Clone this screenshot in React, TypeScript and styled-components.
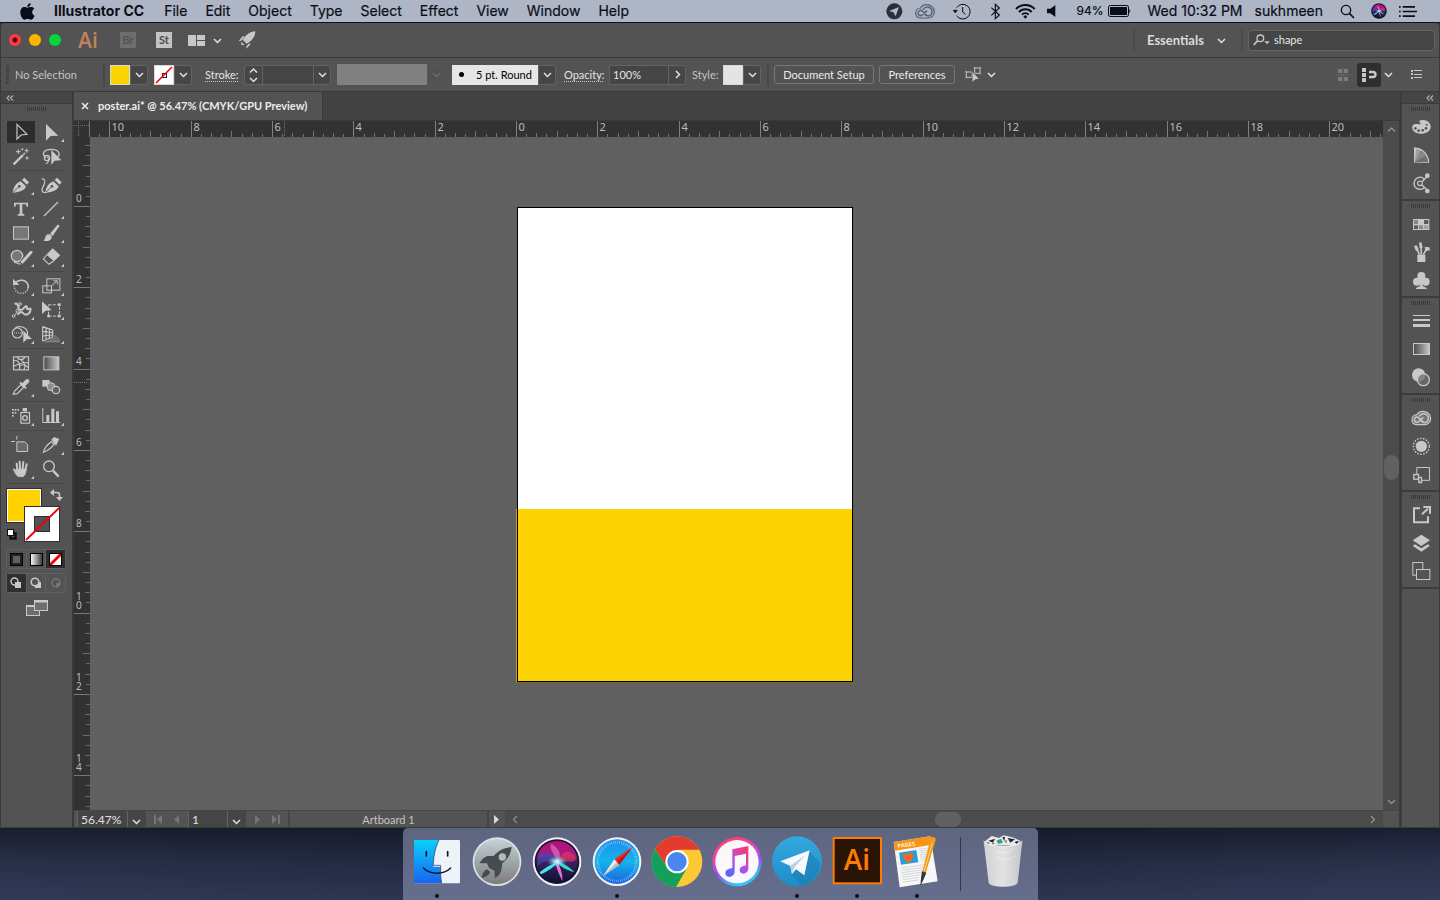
import React from 'react';
import styled, { createGlobalStyle, css } from 'styled-components';

const UI = 'Lato, "Open Sans", sans-serif';
const SYS = 'Inter, "Liberation Sans", sans-serif';
const ICON = '#c8c8c8';
const YELLOW = '#fcd303';

const GlobalStyle = createGlobalStyle`
  *, *::before, *::after { box-sizing: border-box; }
  body { margin: 0; background: #1d2335; }
  button, input, select { font: inherit; color: inherit; margin: 0; padding: 0; border: 0; background: none; border-radius: 0; }
  svg { display: block; flex: none; }
`;

/* ---------- shell ---------- */

const Desktop = styled.div`
  display: flex;
  flex-direction: column;
  min-height: 100vh;
  overflow: hidden;
  background: linear-gradient(90deg, #2b334c 0, #232a40 28%, #232a40 72%, #2d3550 100%);
`;

const MenuBar = styled.header`
  display: flex;
  align-items: center;
  justify-content: space-between;
  flex: none;
  height: 23px;
  padding: 0 23px 0 20px;
  background: #aeb6c5;
  border-bottom: 1px solid #0b1426;
  color: #0a0d18;
  font: 14px/22px ${SYS};
  white-space: nowrap;
`;

const MenuList = styled.nav`
  display: flex;
  align-items: center;
  gap: 18px;
`;

const MenuItem = styled.button<{ $bold?: boolean }>`
  padding-right: ${p => (p.$bold ? 2 : 0)}px;
  font-weight: ${p => (p.$bold ? 700 : 400)};
  -webkit-text-stroke: ${p => (p.$bold ? '0' : '0.2px')};
`;

const AppleSlot = styled.button`
  width: 16px;
`;

const StatusList = styled.div`
  display: flex;
  align-items: center;
  gap: 12px;
`;

const StatusSlot = styled.span<{ $w: number; $center?: boolean; $muted?: boolean }>`
  display: flex;
  align-items: center;
  justify-content: ${p => (p.$center ? 'center' : 'flex-start')};
  width: ${p => p.$w}px;
  color: ${p => (p.$muted ? '#596171' : 'inherit')};
`;

const Battery = styled.span`
  display: flex;
  align-items: center;
  gap: 5px;
  padding-right: 4px;
  font-size: 12px;
  -webkit-text-stroke: 0.2px;
`;

const AppWindow = styled.main`
  display: flex;
  flex-direction: column;
  flex: 1;
  min-height: 0;
  background: #535353;
  border: 1px solid #3a3a3a;
  border-top: 0;
  border-radius: 4px 4px 0 0;
  color: #dcdcdc;
  font: 11px/16px ${UI};
  white-space: nowrap;
`;

const Bar = styled.div<{ $h: number }>`
  display: flex;
  align-items: center;
  flex: none;
  height: ${p => p.$h}px;
  border-bottom: 1px solid #3a3a3a;
`;

const Spacer = styled.div`
  flex: 1;
`;

const VRule = styled.span<{ $h?: number }>`
  width: 2px;
  height: ${p => p.$h ?? 20}px;
  background: #484848;
`;

/* ---------- title bar ---------- */

const Lights = styled.div`
  display: flex;
  gap: 8px;
  padding-left: 8px;
`;

const Light = styled.button<{ $c: string; $dot?: boolean }>`
  width: 12px;
  height: 12px;
  border-radius: 50%;
  background: ${p => (p.$dot ? `radial-gradient(circle, #5c0005 0 2px, ${p.$c} 3px)` : p.$c)};
`;

const AiMark = styled.span`
  width: 25px;
  margin-left: 17px;
  color: #c4825a;
  font: 600 21px/30px "Open Sans", sans-serif;
`;

const AppTile = styled.button<{ $on?: boolean }>`
  width: 16px;
  height: 16px;
  background: ${p => (p.$on ? '#c4c4c4' : '#6e6e6e')};
  color: ${p => (p.$on ? '#4b4b4b' : '#545454')};
  font: 700 11px/16px ${UI};
  text-align: center;
`;

const TitleTiles = styled.div`
  display: flex;
  align-items: center;
  gap: 20px;
  padding-left: 17px;
`;

const TitleIcons = styled.div`
  display: flex;
  align-items: center;
  gap: 8px;
  padding: 0 16px;
`;

const TitleRight = styled.div`
  display: flex;
  align-items: center;
  gap: 5px;
  padding-right: 4px;
`;

const Workspace = styled.div`
  position: relative;
  display: flex;
  align-items: center;
  width: 96px;
  padding-left: 7px;
  font-size: 13px;
  font-weight: 700;
`;

const PlainSelect = styled.select`
  width: 100%;
  appearance: none;
  outline: 0;
`;

const SelectMark = styled.span`
  position: absolute;
  right: 10px;
  pointer-events: none;
`;

const SearchBox = styled.label`
  display: flex;
  align-items: center;
  gap: 4px;
  width: 187px;
  height: 21px;
  padding-left: 4px;
  border: 1px solid #646464;
  border-radius: 3px;
  background: #454545;
`;

const SearchInput = styled.input`
  width: 140px;
  outline: 0;
  color: #e6e6e6;
`;

/* ---------- control bar ---------- */

const Control = styled.div`
  display: flex;
  align-items: center;
  padding-left: 5px;
`;

const Grip = styled.span`
  width: 3px;
  height: 20px;
  background: repeating-linear-gradient(180deg, #3a3a3a 0 1px, transparent 1px 2px);
`;

const Label = styled.label<{ $w: number; $dotted?: boolean; $dim?: boolean }>`
  width: ${p => p.$w}px;
  height: 14px;
  line-height: 14px;
  color: ${p => (p.$dim ? '#c4c4c4' : '#e4e4e4')};
  ${p => p.$dotted && css`border-bottom: 1px dotted #c8c8c8;`}
`;

const Group = styled.div<{ $ml: number }>`
  display: flex;
  align-items: center;
  height: 21px;
  margin-left: ${p => p.$ml}px;
`;

const Swatch = styled.button<{ $fill: string }>`
  width: 20px;
  height: 20px;
  border: 1px solid #d8d8d8;
  background: ${p => p.$fill};
`;

const Drop = styled.button<{ $off?: boolean }>`
  display: flex;
  align-items: center;
  justify-content: center;
  width: 18px;
  height: 20px;
  border: 1px solid ${p => (p.$off ? '#575757' : '#636363')};
  border-radius: 0 3px 3px 0;
  background: ${p => (p.$off ? '#525252' : '#464646')};
  color: ${p => (p.$off ? '#6c6c6c' : '#dedede')};
`;

const Stepper = styled.span`
  display: flex;
  flex-direction: column;
  align-items: center;
  justify-content: center;
  gap: 2px;
  width: 18px;
  height: 20px;
  border: 1px solid #636363;
  border-right: 0;
  border-radius: 3px 0 0 3px;
  background: #464646;
`;

const Field = styled.input<{ $w: number }>`
  width: ${p => p.$w}px;
  height: 20px;
  padding: 0 3px;
  border: 1px solid #636363;
  border-right: 0;
  background: #454545;
  color: #e4e4e4;
  outline: 0;
`;

const Profile = styled.span`
  width: 90px;
  height: 21px;
  background: #808080;
`;

const BrushBox = styled.div`
  display: flex;
  align-items: center;
  gap: 12px;
  width: 86px;
  height: 20px;
  padding-left: 7px;
  background: #e6e6e6;
  color: #000;
`;

const BrushDot = styled.span`
  width: 5px;
  height: 5px;
  border-radius: 50%;
  background: #000;
`;

const Push = styled.button<{ $w: number }>`
  width: ${p => p.$w}px;
  height: 19px;
  margin-left: 5px;
  border: 1px solid #777;
  border-radius: 3px;
  color: #ececec;
  line-height: 16px;
`;

const SnapGroup = styled.div`
  display: flex;
  align-items: center;
  padding-right: 16px;
`;

const SnapButton = styled.button`
  display: flex;
  align-items: center;
  justify-content: center;
  width: 24px;
  height: 24px;
  margin: 0 3px 0 7px;
  border-radius: 3px;
  background: #2f2f2f;
`;

/* ---------- body ---------- */

const Body = styled.div`
  display: flex;
  flex: 1;
  min-height: 0;
`;

const ToolPanel = styled.aside`
  display: flex;
  flex-direction: column;
  flex: none;
  width: 73px;
  border-right: 2px solid #3a3a3a;
`;

const PanelHead = styled.div<{ $right?: boolean }>`
  display: flex;
  align-items: center;
  justify-content: ${p => (p.$right ? 'flex-end' : 'flex-start')};
  flex: none;
  height: 12px;
  padding: 0 5px;
  border-bottom: 1px solid #3a3a3a;
  background: #454545;
`;

const HGrip = styled.span`
  align-self: center;
  flex: none;
  width: 19px;
  height: 4px;
  background: repeating-linear-gradient(90deg, #3a3a3a 0 1px, transparent 1px 2px);
`;

const ToolBody = styled.div`
  display: flex;
  flex-direction: column;
  padding: 3px 5px 0;
`;

const ToolGroup = styled.div`
  display: grid;
  grid-template-columns: 30px 30px;
  grid-auto-rows: 24px;
  margin-bottom: 5px;
  position: relative;
  &::after {
    content: '';
    position: absolute;
    left: 0;
    right: 1px;
    bottom: -3px;
    height: 1px;
    background: #474747;
  }
`;

const ToolTop = styled.div`
  display: flex;
  flex-direction: column;
  height: 13px;
`;

const Tool = styled.button<{ $on?: boolean }>`
  width: 30px;
  height: 24px;
  background: ${p => (p.$on ? 'linear-gradient(#2d2d2d, #2d2d2d) center / 28px 22px no-repeat' : 'none')};
`;

const ModeRow = styled.div`
  display: flex;
  width: 60px;
  height: 20px;
  margin-top: 4px;
  border: 1px solid #606060;
  border-radius: 3px;
`;

const Mode = styled.button<{ $on?: boolean }>`
  display: flex;
  flex: 1;
  align-items: center;
  justify-content: center;
  border-right: 1px solid #606060;
  background: ${p => (p.$on ? '#2f2f2f' : 'none')};
  &:last-child { border-right: 0; }
`;

const ScreenMode = styled.button`
  align-self: center;
  margin-top: 7px;
`;

const DocumentArea = styled.section`
  display: flex;
  flex-direction: column;
  flex: 1;
  min-width: 0;
`;

const TabBar = styled.div`
  display: flex;
  flex: none;
  height: 29px;
  background: #424242;
  border-bottom: 1px solid #3a3a3a;
`;

const Tab = styled.div`
  display: flex;
  align-items: center;
  gap: 9px;
  width: 249px;
  padding-left: 7px;
  border-right: 1px solid #383838;
  background: #535353;
  color: #ececec;
  font-weight: 700;
`;

const Work = styled.div`
  display: grid;
  grid-template-columns: 16px minmax(0, 1fr) 17px;
  grid-template-rows: 16px minmax(0, 1fr);
  flex: 1;
  min-height: 0;
`;

const RulerBox = styled.div`
  overflow: hidden;
  background: #323232;
  & > svg { width: 100%; height: 100%; }
`;

const Canvas = styled.div`
  position: relative;
  overflow: hidden;
  min-height: 560px;
  background: #606060;
`;

const Artboard = styled.div`
  position: absolute;
  left: 427px;
  top: 70px;
  width: 336px;
  height: 475px;
  border: 1px solid #000;
  background: #fff;
`;

const PosterBlock = styled.div`
  position: absolute;
  left: 426px;
  top: 372px;
  width: 337px;
  height: 174px;
  border-left: 1px solid #c99f2c;
  border-bottom: 1px solid #7c6a2c;
  background: linear-gradient(${YELLOW}, ${YELLOW}) 1px 0 / 334px 172px no-repeat, #000;
`;

const VScroll = styled.div`
  display: flex;
  flex-direction: column;
  grid-row: 1 / 3;
  grid-column: 3;
  align-items: center;
  padding: 5px 0;
  background: #4b4b4b;
  border-right: 1px solid #3c3c3c;
`;

const VThumb = styled.div`
  width: 15px;
  height: 25px;
  border-radius: 8px;
  background: #616161;
`;

const Flex = styled.div<{ $n: number }>`
  flex: ${p => p.$n};
`;

const FootBar = styled.div`
  display: flex;
  flex: none;
  height: 17px;
  padding-left: 3px;
  border-top: 1px solid #454545;
`;

const FootSelect = styled.div<{ $w: number }>`
  position: relative;
  display: flex;
  width: ${p => p.$w}px;
  padding-left: 3px;
  background: linear-gradient(90deg, transparent calc(100% - 19px), #636363 0 calc(100% - 18px), transparent 0), #454545;
  border-left: 1px solid #636363;
  color: #e2e2e2;
  font-size: 12px;
  line-height: 18px;
`;

const FootMark = styled.span`
  position: absolute;
  right: 5px;
  top: 7px;
  pointer-events: none;
`;

const FootNav = styled.div`
  display: flex;
  align-items: center;
  justify-content: center;
  gap: 10px;
  width: 42px;
`;

const FootLabel = styled.div`
  width: 201px;
  border: 0 solid #454545;
  border-width: 0 2px;
  color: #c4c4c4;
  line-height: 18px;
  text-align: center;
`;

const FootPlay = styled.button`
  display: flex;
  align-items: center;
  justify-content: center;
  width: 16px;
`;

const HScroll = styled.div`
  display: flex;
  flex: 1;
  align-items: center;
  padding: 0 6px;
  background: #4b4b4b;
`;

const HThumb = styled.div`
  width: 26px;
  height: 15px;
  border-radius: 8px;
  background: #616161;
`;

const Corner = styled.div`
  width: 17px;
  border-right: 1px solid #3c3c3c;
`;

const RightDock = styled.aside`
  display: flex;
  flex-direction: column;
  flex: none;
  width: 39px;
  border-left: 2px solid #3a3a3a;
`;

const DockGroup = styled.div`
  display: flex;
  flex-direction: column;
  align-items: center;
  height: 97px;
  padding-top: 3px;
  border-bottom: 2px solid #3c3c3c;
`;

const DockIcons = styled.div`
  display: flex;
  flex-direction: column;
  padding-top: 2px;
`;

const DockButton = styled.button`
  width: 37px;
  height: 28px;
`;

/* ---------- dock ---------- */

const DeskStrip = styled.footer`
  display: flex;
  justify-content: center;
  flex: none;
  height: 72px;
  background: linear-gradient(180deg, rgba(16, 20, 32, 0.65), rgba(36, 43, 66, 0.3) 50%, rgba(56, 64, 98, 0.5));
`;

const Dock = styled.div`
  display: flex;
  padding: 0 5px 0 4px;
  border-radius: 5px 5px 0 0;
  background: linear-gradient(180deg, #5e657f, #666e8e);
`;

const DockApp = styled.button`
  width: 60px;
  height: 72px;
`;

const DockRule = styled.span`
  width: 1px;
  height: 54px;
  margin: 9px 12px 0 13px;
  background: #32384c;
`;

/* ---------- small glyphs ---------- */

type Dir = 'down' | 'up' | 'left' | 'right';
const CHEV: Record<Dir, string> = {
  down: 'M1 2 L4.5 5.5 L8 2',
  up: 'M1 5.5 L4.5 2 L8 5.5',
  left: 'M6 1 L2.5 4.5 L6 8',
  right: 'M3 1 L6.5 4.5 L3 8',
};
const Chevron = ({ dir = 'down', color = '#e0e0e0', thin }: { dir?: Dir; color?: string; thin?: boolean }) => {
  const flat = dir === 'down' || dir === 'up';
  return (
    <svg width="9" height={flat ? 7 : 9} viewBox={flat ? '0 0 9 7' : '0 0 9 9'}>
      <path d={CHEV[dir]} fill="none" stroke={color} strokeWidth={thin ? 1.2 : 1.5} />
    </svg>
  );
};

const Collapse = () => (
  <svg width="8" height="6" viewBox="0 0 8 6">
    <path d="M3.5 0.5 L1 3 L3.5 5.5 M7 0.5 L4.5 3 L7 5.5" fill="none" stroke="#b4b4b4" strokeWidth="1.1" />
  </svg>
);

const SiriOrb = ({ id, size }: { id: string; size: number }) => (
  <svg width={size} height={size} viewBox="0 0 148 148">
    <defs>
      <linearGradient id={`${id}a`} x1="0" y1="0" x2="0" y2="1">
        <stop offset="0" stopColor="#b3107c" />
        <stop offset="0.35" stopColor="#a81a80" />
        <stop offset="0.5" stopColor="#3c2264" />
        <stop offset="1" stopColor="#0d1230" />
      </linearGradient>
      <radialGradient id={`${id}b`}>
        <stop offset="0" stopColor="#fff" />
        <stop offset="0.4" stopColor="#9df5ff" stopOpacity="0.7" />
        <stop offset="1" stopColor="#22b9d8" stopOpacity="0" />
      </radialGradient>
    </defs>
    {size > 40 && <circle cx="74" cy="74" r="73" fill="#f0f0f2" />}
    <circle cx="74" cy="74" r={size > 40 ? 67 : 72} fill="#15132c" />
    <circle cx="74" cy="74" r="62" fill={`url(#${id}a)`} />
    <path d="M18 56 C40 34 62 50 74 74 C50 66 30 72 14 88 Z" fill="#3b4fae" opacity="0.7" />
    <path d="M74 74 C90 40 112 34 130 62 C134 80 100 70 74 74 Z" fill="#e0365f" opacity="0.7" />
    <path d="M22 106 C44 88 58 82 76 76 C66 90 44 104 26 112 Z" fill="#3fe6ea" />
    <path d="M76 76 C96 78 112 92 126 106 C104 100 86 92 76 76 Z" fill="#34dcc0" />
    <path d="M76 76 C84 94 92 112 90 132 C84 118 74 100 70 80 Z" fill="#f06fd0" />
    <path d="M74 76 C70 54 50 40 56 20 C74 30 92 46 78 76 Z" fill="#f4a3df" opacity="0.45" />
    <ellipse cx="74" cy="74" rx="30" ry="18" fill={`url(#${id}b)`} />
  </svg>
);

/* linked loops inside a cloud outline, on a 60 x 45 field */
const CloudMark = ({ fill = 'none' }: { fill?: string }) => (
  <g fill="none" stroke="currentColor">
    <path d="M16 42 C6 41 2 34 2 27 C2 18 9 12 17 12 C20 6 26 2 34 2 C48 2 58 12 58 23 C58 34 50 42 40 42 Z" fill={fill} strokeWidth="3.500" />
    <path d="M36 35 L22 21 C17 17 9 20 9 27 C9 34 17 37 22 33 L36 20" strokeWidth="4.500" />
    <path d="M24 17 C28 8 40 7 47 13 C54 20 52 31 44 35 C39 37 34 35 30 31" strokeWidth="4.500" />
  </g>
);

/* ---------- toolbox glyphs, drawn on a 90 x 72 field ---------- */

const Pen = () => (
  <>
    <path d="M20 59 C22 42 30 30 44 25 L60 40 C56 52 42 58 20 59 Z" fill={ICON} />
    <path d="M48 21 L55 14 L69 28 L63 35 Z" fill={ICON} />
    <path d="M21 58 L38 42" stroke="#535353" strokeWidth="2.5" />
    <circle cx="40" cy="40" r="4" fill="#535353" />
  </>
);
const corner = <path d="M84 56 V66 H75 Z" fill={ICON} />;
const star = (x: number, y: number, r = 5) => (
  <path d={`M${x - r} ${y} H${x + r} M${x} ${y - r} V${y + r}`} stroke={ICON} strokeWidth="3" />
);

type Glyph = { name: string; more?: boolean; on?: boolean; art: React.ReactNode };

const TOOLS: Glyph[][] = [
  [
    { name: 'Selection', on: true, art: <path d="M33 13 V57 L45 45 L63 43 Z" fill="none" stroke={ICON} strokeWidth="3.5" /> },
    { name: 'Direct Selection', more: true, art: <path d="M30 12 V62 L44 48 L67 47 Z" fill={ICON} /> },
    {
      name: 'Magic Wand', art: <>
        <path d="M23 61 L51 33" stroke={ICON} strokeWidth="7" />
        <path d="M52 32 L57 27" stroke={ICON} strokeWidth="5" />
        {star(37, 23, 7)}{star(62, 20, 6)}{star(63, 42, 5)}{star(49, 16, 3)}
      </>,
    },
    {
      name: 'Lasso', art: <>
        <path d="M30 40 C14 30 24 16 46 16 C66 16 76 28 64 40" fill="none" stroke={ICON} strokeWidth="4" />
        <circle cx="33" cy="42" r="8" fill="none" stroke={ICON} strokeWidth="3.5" />
        <path d="M33 38 C40 44 42 52 30 60" fill="none" stroke={ICON} strokeWidth="3.5" />
        <path d="M46 18 V62 L56 50 L76 49 Z" fill={ICON} />
      </>,
    },
  ],
  [
    { name: 'Pen', more: true, art: <Pen /> },
    {
      name: 'Curvature', art: <>
        <g transform="translate(8 0)"><Pen /></g>
        <path d="M17 18 C32 16 26 34 20 44 C14 56 22 60 32 58" fill="none" stroke={ICON} strokeWidth="3.5" />
      </>,
    },
    { name: 'Type', more: true, art: <path d="M24 17 H66 V29 H62 L60 22 H49 V50 L55 52 V56 H35 V52 L41 50 V22 H30 L28 29 H24 Z" fill={ICON} /> },
    { name: 'Line Segment', more: true, art: <path d="M24 57 L66 15" stroke={ICON} strokeWidth="3.5" /> },
    { name: 'Rectangle', more: true, art: <rect x="22.500" y="17.500" width="45" height="37" fill="#777" stroke={ICON} strokeWidth="3" /> },
    {
      name: 'Paintbrush', more: true, art: <>
        <path d="M22 59 C30 54 26 44 35 40 C44 38 50 46 46 53 C42 60 32 61 22 59 Z" fill={ICON} />
        <path d="M42 38 L64 12 C68 10 71 13 70 16 L50 45 Z" fill={ICON} />
      </>,
    },
    {
      name: 'Shaper', more: true, art: <>
        <circle cx="33" cy="33" r="17" fill="#777" stroke={ICON} strokeWidth="4" />
        <path d="M48 52 L74 22" stroke="#535353" strokeWidth="14" />
        <path d="M49 51 L75 22" stroke={ICON} strokeWidth="9" strokeLinecap="round" />
        <path d="M24 53 C32 48 34 60 44 56" fill="none" stroke={ICON} strokeWidth="4" />
      </>,
    },
    {
      name: 'Eraser', more: true, art: <>
        <path d="M50 10 L73 31 L54 49 L31 29 Z" fill={ICON} />
        <path d="M32 30 L22 42 L39 58 L53 48" fill="none" stroke={ICON} strokeWidth="3.500" />
      </>,
    },
  ],
  [
    {
      name: 'Rotate', more: true, art: <>
        <path d="M28 27 C40 13 60 18 66 32 C67 36 67 40 66 44" fill="none" stroke={ICON} strokeWidth="4.5" />
        <path d="M65 46 C58 62 34 62 27 46 L24 36" fill="none" stroke={ICON} strokeWidth="4" strokeDasharray="4 4" />
        <path d="M21 14 V33 H40 Z" fill={ICON} />
      </>,
    },
    {
      name: 'Scale', more: true, art: <g fill="none" stroke={ICON} strokeWidth="3">
        <rect x="32.500" y="14.500" width="39" height="34" />
        <rect x="20.500" y="35.500" width="26" height="21" />
        <path d="M48 34 L62 22 M52 20.500 H64 V31" />
      </g>,
    },
    {
      name: 'Width', more: true, art: <>
        <path d="M26 18 C34 14 36 22 38 30 C40 38 46 38 52 32 C58 24 64 22 63 30 C62 36 72 34 73 30 C76 48 60 54 52 46 C46 38 40 44 34 50" fill="none" stroke={ICON} strokeWidth="6" />
        <path d="M22 54 C30 52 34 36 40 20" fill="none" stroke={ICON} strokeWidth="3" />
        <g fill="#535353" stroke={ICON} strokeWidth="3"><circle cx="23" cy="54" r="4" /><circle cx="34" cy="38" r="4" /><circle cx="42" cy="18" r="4" /></g>
      </>,
    },
    {
      name: 'Free Transform', more: true, art: <>
        <rect x="37.500" y="20.500" width="33" height="34" fill="none" stroke={ICON} strokeWidth="3" strokeDasharray="9 4" />
        {[[66, 16], [66, 50], [34, 50]].map(([x, y]) => <rect key={`${x}${y}`} x={x} y={y} width="8" height="8" fill={ICON} />)}
        <path d="M18 10 V48 L29 38 L47 37 Z" fill={ICON} />
      </>,
    },
    {
      name: 'Shape Builder', more: true, art: <>
        <circle cx="34" cy="33" r="15" fill="none" stroke={ICON} strokeWidth="3.500" />
        <path d="M26 20 C34 10 58 12 64 28 C66 34 64 40 60 44" fill="none" stroke={ICON} strokeWidth="3.500" />
        <path d="M24 33 H60" stroke={ICON} strokeWidth="3" strokeDasharray="3 3" />
        <path d="M52 26 V62 L62 52 L78 51 Z" fill={ICON} />
      </>,
    },
    {
      name: 'Perspective Grid', more: true, art: <>
        <path d="M20 13 V58 M30 16 V54 M40 19 V50 M50 24 V45 M20 14 L50 24 M20 28 L50 32 M20 42 L50 39 M20 57 L50 45" fill="none" stroke={ICON} strokeWidth="3.500" />
        <path d="M54 42 H62 M46 48 H68 M38 54 H72 M26 59 H72" stroke="#909090" strokeWidth="3" />
      </>,
    },
  ],
  [
    {
      name: 'Mesh', art: <g fill="none" stroke={ICON} strokeWidth="3.500">
        <rect x="22.500" y="17.500" width="45" height="39" />
        <path d="M23 30 C36 24 44 38 40 56 M34 18 C38 30 54 26 56 18 M44 26 C56 32 60 46 54 56 M23 46 C34 42 50 30 67 36 M42 44 C52 38 60 42 67 50" />
      </g>,
    },
    { name: 'Gradient', art: <rect x="23.500" y="17.500" width="45" height="39" fill="url(#fade)" stroke={ICON} strokeWidth="3" /> },
    {
      name: 'Eyedropper', more: true, art: <>
        <path d="M22 58 L26 48 L46 28 L54 36 L34 56 Z" fill="none" stroke={ICON} strokeWidth="3.500" />
        <path d="M42 22 L60 40" stroke={ICON} strokeWidth="6" />
        <path d="M52 30 L64 18" stroke={ICON} strokeWidth="12" strokeLinecap="round" />
      </>,
    },
    {
      name: 'Blend', art: <>
        <rect x="19" y="15" width="22" height="20" fill={ICON} />
        <circle cx="45" cy="35" r="12" fill="#8e8e8e" stroke={ICON} strokeWidth="3" />
        <circle cx="60" cy="45" r="11" fill="#606060" stroke={ICON} strokeWidth="3.500" />
      </>,
    },
  ],
  [
    {
      name: 'Symbol Sprayer', more: true, art: <>
        {[[18, 15], [26, 15], [34, 15], [18, 24], [26, 24], [18, 33]].map(([x, y]) => <rect key={`${x}-${y}`} x={x} y={y} width="5" height="5" fill={ICON} />)}
        <rect x="50" y="12" width="13" height="10" fill={ICON} />
        <rect x="44.500" y="25.500" width="26" height="32" fill="none" stroke={ICON} strokeWidth="3.500" />
        <circle cx="57" cy="42" r="7" fill="none" stroke={ICON} strokeWidth="4" />
      </>,
    },
    {
      name: 'Column Graph', more: true, art: <>
        <path d="M20.500 12 V55.500 H73" fill="none" stroke={ICON} strokeWidth="3" />
        <path d="M31 33 H40 V55 H31 Z M46 14 H55 V55 H46 Z M60 22 H69 V55 H60 Z" fill={ICON} />
      </>,
    },
  ],
  [
    {
      name: 'Artboard', art: <>
        <path d="M32.500 26.500 H56 L65 35 V55.500 H32.500 Z" fill="#6a6a6a" stroke={ICON} strokeWidth="3" />
        <path d="M15 25.500 H27 M32.500 9 V20" stroke={ICON} strokeWidth="3" />
      </>,
    },
    {
      name: 'Slice', more: true, art: <>
        <path d="M22 58 C26 44 34 34 46 26 L54 34 C46 46 36 52 22 58 Z" fill="none" stroke={ICON} strokeWidth="3.500" />
        <path d="M46 20 L54 12 L70 18 L60 38 Z" fill={ICON} />
      </>,
    },
    {
      name: 'Hand', more: true, art: <g stroke={ICON} fill={ICON} strokeLinecap="round">
        <path d="M34 38 L32 20 M42 34 L41 14 M50 34 L52 15 M58 38 L62 22" strokeWidth="6" />
        <path d="M32 42 C26 36 22 34 22 37 C26 46 32 58 38 59 H52 C58 54 60 46 61 36 H32 Z" strokeWidth="2" />
      </g>,
    },
    {
      name: 'Zoom', art: <g fill="none" stroke={ICON}>
        <circle cx="39" cy="28" r="16" strokeWidth="4" />
        <path d="M51 41 L68 59" strokeWidth="7" />
      </g>,
    },
  ],
];

const ToolGlyph = ({ g }: { g: Glyph }) => (
  <svg width="30" height="24" viewBox="0 0 90 72" aria-hidden="true">
    {g.art}
    {g.more && corner}
  </svg>
);

const FillStroke = () => (
  <svg width="60" height="59" viewBox="0 -1 60 59" aria-hidden="true">
    <rect x="0.500" y="1.500" width="35" height="34" fill="#fff" stroke="#2d2d2d" />
    <rect x="2" y="3" width="32" height="31" fill="#ffd200" />
    <rect x="18.500" y="19.500" width="35" height="35" fill="#fff" stroke="#2d2d2d" />
    <rect x="28.500" y="29.500" width="15" height="15" fill="#535353" stroke="#2d2d2d" />
    <path d="M20 53 L53 21" stroke="#f50000" strokeWidth="1.800" />
    <path d="M46 5.500 H51 Q53.500 5.500 53.500 8 V12" fill="none" stroke={ICON} strokeWidth="1.500" />
    <path d="M48 2 V9 L44 5.500 Z M50 10 H57 L53.500 14 Z" fill={ICON} />
    <rect x="4.500" y="46.500" width="5" height="5" fill="none" stroke="#111" strokeWidth="2.500" />
    <rect x="1.500" y="42.500" width="6" height="6" fill="#fff" stroke="#111" />
  </svg>
);

/* ---------- panel glyphs, drawn on a 111 x 84 field ---------- */

const PANELS: { name: string; art: React.ReactNode }[][] = [
  [
    {
      name: 'Color', art: <>
        <path d="M31 46 C29 32 42 32 50 34 C56 36 58 30 52 28 C50 22 60 20 68 22 C80 24 87 34 86 44 C84 56 70 63 54 62 C42 61 32 56 31 46 Z" fill={ICON} />
        <g fill="#535353"><circle cx="40" cy="46" r="4" /><circle cx="50" cy="53" r="4" /><circle cx="62" cy="52" r="4" /><circle cx="72" cy="46" r="4" /><circle cx="74" cy="35" r="3" /></g>
      </>,
    },
    {
      name: 'Color Guide', art: <>
        <path d="M36 19 C62 20 80 38 82 65 H36 Z" fill={ICON} />
        <path d="M38 64 L42 24 C62 26 76 44 78 62 Z" fill="#a0a0a0" />
        <path d="M38 64 L56 28 C70 36 77 48 78 62 Z" fill="#888" />
        <path d="M38 64 L71 44 L78 62 Z" fill="#6e6e6e" />
      </>,
    },
    {
      name: 'Color Themes', art: <g fill="none" stroke={ICON} strokeWidth="4">
        <path d="M67 56 C58 64 44 62 38 52 C33 42 38 30 48 26 C56 23 64 26 67 31" />
        <circle cx="54" cy="43" r="7" strokeWidth="3.500" />
        <path d="M60 38 L76 22 M60 48 L76 64" />
        <circle cx="76" cy="20" r="5" fill={ICON} /><circle cx="76" cy="66" r="5" fill={ICON} />
      </g>,
    },
  ],
  [
    {
      name: 'Swatches', art: <>
        <rect x="33" y="27" width="49" height="33" fill={ICON} />
        <g fill="#5c5c5c"><path d="M36 30 H48 V42 H36 Z" fill="#888" /><path d="M66 30 H79 V42 H66 Z" /><path d="M36 46 H48 V57 H36 Z" /><path d="M51 46 H63 V57 H51 Z" fill="#888" /><path d="M66 46 H79 V57 H66 Z" fill="#a4a4a4" /></g>
      </>,
    },
    {
      name: 'Brushes', art: <>
        <rect x="46" y="50" width="24" height="22" fill={ICON} />
        <path d="M52 50 L44 30 M58 50 L57 26 M64 50 L74 32" stroke={ICON} strokeWidth="5" />
        <path d="M36 24 L44 22 L50 34 L42 40 Z M51 14 L58 12 L62 30 H53 Z M68 26 L82 28 L84 37 L70 39 Z" fill={ICON} />
      </>,
    },
    {
      name: 'Symbols', art: <g fill={ICON}><circle cx="58" cy="30" r="12" /><circle cx="45" cy="47" r="12" /><circle cx="71" cy="47" r="12" /><path d="M55 40 H61 L62 60 L74 66 V69 H42 V66 L54 60 Z" /></g>,
    },
  ],
  [
    { name: 'Stroke', art: <path d="M33 24 H84 V27 H33 Z M33 36 H84 V42 H33 Z M33 51 H84 V60 H33 Z" fill={ICON} /> },
    { name: 'Gradient', art: <rect x="34.500" y="25.500" width="48" height="33" fill="url(#fade)" stroke={ICON} strokeWidth="3" /> },
    {
      name: 'Transparency', art: <>
        <circle cx="50" cy="36" r="20" fill={ICON} />
        <circle cx="64" cy="50" r="18" fill="#6e6e6e" fillOpacity="0.75" stroke={ICON} strokeWidth="4" />
      </>,
    },
  ],
  [
    { name: 'Libraries', art: <g transform="translate(28 20)" color={ICON}><CloudMark fill="#757575" /></g> },
    {
      name: 'Appearance', art: <>
        <circle cx="58" cy="43" r="17" fill={ICON} />
        <circle cx="58" cy="43" r="24" fill="none" stroke={ICON} strokeWidth="4" strokeDasharray="5 4" />
      </>,
    },
    {
      name: 'Graphic Styles', art: <g fill="none" stroke={ICON} strokeWidth="3"><path d="M44.500 42 V22.500 H82.500 V61 H60" /><path d="M50.500 58 V67.500 H58.500 V52 H50" strokeWidth="4" /><rect x="35.500" y="43.500" width="14" height="14" strokeWidth="4" /></g>,
    },
  ],
  [
    { name: 'Asset Export', art: <g fill="none" stroke={ICON} strokeWidth="6"><path d="M54 22 H36 V64 H78 V46" /><path d="M60 40 L78 23 M64 18 H84 V38" /></g> },
    {
      name: 'Layers', art: <>
        <path d="M58 17 L84 34 L58 51 L32 34 Z" fill={ICON} />
        <path d="M32 50 L39 46 L58 58 L77 46 L84 50 L58 68 Z" fill={ICON} />
      </>,
    },
    { name: 'Artboards', art: <g fill="#535353" stroke={ICON} strokeWidth="3"><rect x="32.500" y="16.500" width="30" height="38" /><rect x="43.500" y="37.500" width="40" height="30" /></g> },
  ],
];

/* ---------- rulers: 2 in apart on screen, eight divisions each ---------- */

const PITCH = 81.32;
const marks = (origin: number, first: number, last: number) => {
  const out: { at: number; i: number; k: number }[] = [];
  for (let k = first; k <= last; k++) {
    for (let i = 0; i < 8; i++) out.push({ at: Math.round(origin + (k + i / 8) * PITCH) + 0.5, i, k });
  }
  return out.filter(m => m.at > 0);
};

const HRuler = () => (
  <svg aria-hidden="true" fontFamily="Noto Sans, sans-serif" fontSize="11" fill="#bdbdbd">
    {marks(426, -6, 10).map(({ at, i, k }) => (
      <g key={at}>
        <path d={`M${at} ${i === 0 ? 0 : i === 4 ? 10 : i % 2 ? 13 : 12} V16`} stroke={i === 0 ? '#808080' : '#747474'} />
        {i === 0 && <text x={at + 2} y="10">{Math.abs(k * 2)}</text>}
      </g>
    ))}
    <path d="M194.500 0 V16" stroke="#777" strokeDasharray="1 1" />
  </svg>
);

const VRuler = () => (
  <svg aria-hidden="true" fontFamily="Noto Sans, sans-serif" fontSize="10" fill="#bdbdbd">
    {marks(69, -1, 7).map(({ at, i, k }) => (
      <g key={at}>
        <path d={`M${i === 0 ? 0 : i === 4 ? 9 : i % 2 ? 12 : 11} ${at} H16`} stroke={i === 0 ? '#777' : '#6c6c6c'} />
        {i === 0 && k >= 0 && String(k * 2).split('').reverse().map((d, n) => (
          <text key={n} x="2" y={at - 5 - n * 9}>{d}</text>
        ))}
      </g>
    ))}
    <path d="M0 245.500 H14" stroke="#777" strokeDasharray="1 1" />
  </svg>
);

/* ---------- dock art, drawn on a 180 x 216 field ---------- */

const DOCK: { name: string; running?: boolean; art: React.ReactNode }[] = [
  {
    name: 'Finder', running: true, art: <>
      <rect x="21" y="36" width="138" height="130" rx="3" fill="#eef3f9" />
      <path d="M96 36 H24 Q21 36 21 39 V163 Q21 166 24 166 H104 C101 150 100 134 101 116 H79 C79 90 84 60 96 36 Z" fill="url(#finder)" />
      <path d="M58 71 V84 M122 71 V84" stroke="#0c1420" strokeWidth="5" strokeLinecap="round" />
      <path d="M49 120 C70 141 110 141 131 120" fill="none" stroke="#0c1420" strokeWidth="4" strokeLinecap="round" />
      <path d="M96 36 C84 60 79 90 79 112 H101 C100 134 101 150 104 166" fill="none" stroke="#25303e" strokeWidth="2" />
    </>,
  },
  {
    name: 'Launchpad', art: <>
      <circle cx="90" cy="101" r="73" fill="#dde3e5" />
      <circle cx="90" cy="101" r="68" fill="url(#pad)" />
      <path d="M134 57 C112 58 94 68 80 84 L62 84 C50 88 42 96 38 106 L60 106 L66 120 L82 128 L84 150 C96 144 102 134 104 122 L106 106 C124 92 132 76 134 57 Z" fill="#454c50" />
      <circle cx="106" cy="87" r="11" fill="#b2bbbe" />
      <path d="M60 124 C50 128 46 138 44 150 C56 148 66 142 70 132 Z" fill="#454c50" />
    </>,
  },
  { name: 'Siri', art: <g transform="translate(16 27)"><SiriOrb id="dock" size={148} /></g> },
  {
    name: 'Safari', running: true, art: <>
      <circle cx="90" cy="101" r="73" fill="#f2f3f5" />
      <circle cx="90" cy="101" r="67" fill="url(#safari)" />
      <circle cx="90" cy="101" r="58" fill="none" stroke="#d6f0ff" strokeWidth="8" strokeDasharray="1.500 4.570" opacity="0.8" />
      <path d="M136 58 L82 94 L97 110 Z" fill="#f5241c" />
      <path d="M48 144 L82 94 L97 110 Z" fill="#eee" />
      <path d="M48 144 L90 102 L97 110 Z" fill="#b9bdc4" />
      <path d="M136 58 L90 102 L97 110 Z" fill="#c3121c" />
    </>,
  },
  {
    name: 'Chrome', art: <>
      <circle cx="90" cy="101" r="76" fill="#fcc934" />
      <path d="M90 25 A76 76 0 0 1 157 65 H90 L60 118 L24 63 A76 76 0 0 1 90 25 Z" fill="#e33b2e" />
      <path d="M24 63 A76 76 0 0 0 87 177 L122 117 L90 136 L60 118 Z" fill="#12a05a" />
      <circle cx="90" cy="101" r="35" fill="#fff" />
      <circle cx="90" cy="101" r="29" fill="#4a86f0" />
    </>,
  },
  {
    name: 'iTunes', art: <>
      <circle cx="90" cy="101" r="74" fill="url(#tunes)" />
      <circle cx="90" cy="101" r="65" fill="#fbf8fc" />
      <path d="M76 64 L124 54 V121 C124 140 98 142 98 127 C98 114 112 114 117 112 V77 L83 84 V130 C83 150 55 152 55 136 C55 122 70 122 76 120 Z" fill="url(#note)" />
    </>,
  },
  {
    name: 'Telegram', running: true, art: <>
      <circle cx="90" cy="100" r="75" fill="url(#tele)" />
      <path d="M128 72 L160 104 A75 75 0 0 1 102 174 L74 140 Z" fill="#1677ab" opacity="0.45" />
      <path d="M40 100 L128 67 L112 142 L87 124 L75 138 L70 114 Z" fill="#f4f9fd" />
      <path d="M70 114 L116 80 L82 118 L75 138 Z" fill="#b6d0e2" />
    </>,
  },
  {
    name: 'Illustrator', running: true, art: <>
      <rect x="17" y="27" width="148" height="142" fill="#ff7c00" />
      <rect x="23" y="33" width="136" height="130" fill="#2a1505" />
      <text x="90" y="126" textAnchor="middle" fontFamily="Open Sans, sans-serif" fontSize="84" fontWeight="600" fill="#ff7c00">Ai</text>
    </>,
  },
  {
    name: 'Pages', running: true, art: <>
      <path d="M20 42 L130 25 L152 160 L38 178 Z" fill="#f7f7f7" />
      <path d="M20 42 L130 25 L134 50 L24 68 Z" fill="#f79414" />
      <text x="32" y="60" transform="rotate(-8 32 60)" fontFamily="Open Sans, sans-serif" fontSize="17" fontWeight="700" fill="#fff3dc">PAGES</text>
      <path d="M36 74 L88 66 L94 103 L42 110 Z" fill="#2a9ddd" />
      <path d="M48 80 C56 72 64 84 66 76 C74 70 84 78 78 88 L66 106 C60 100 46 94 48 80 Z" fill="#f06a1c" />
      <path d="M96 64 L126 60 M97 70 L127 66 M98 76 L128 72 M99 82 L128 78 M100 88 L126 84 M101 94 L124 90 M102 100 L120 97 M42 120 L114 110 M43 127 L110 118 M44 134 L108 125 M45 141 L106 132 M46 148 L100 140 M47 155 L96 148 M48 162 L94 156" stroke="#c0c4c8" strokeWidth="2" />
      <path d="M130 32 C134 24 148 26 146 36 L116 136 L106 132 Z" fill="#f39a1d" />
      <path d="M136 44 L112 130" stroke="#ffd375" strokeWidth="3" />
      <path d="M105 130 L118 134 L110 154 L100 174 L102 150 Z" fill="#34383e" />
    </>,
  },
];

const Trash = () => (
  <>
    <path d="M36 40 L56 24 L78 30 L92 22 L118 28 L142 38 L136 52 H42 Z" fill="#e7e9ea" />
    <path d="M46 38 L66 32 L60 44 Z M104 30 L126 34 L112 44 Z M88 28 L96 26 L94 40 Z M124 42 L138 38 L132 48 Z M42 42 L50 46 L44 50 Z" fill="#23282c" />
    <path d="M70 38 L84 32 L90 44 L76 48 Z" fill="#29a58c" />
    <path d="M94 40 L102 36 L100 46 Z M56 46 L66 44 L60 50 Z" fill="#c0642c" />
    <path d="M32 40 C48 60 132 60 148 40 L134 164 C130 180 52 180 47 164 Z" fill="url(#bin)" />
    <path d="M32 40 C48 60 132 60 148 40" fill="none" stroke="#f6f7f8" strokeWidth="3" />
    <path d="M60 62 C76 78 100 80 124 60 M70 84 C90 100 110 96 124 84" fill="none" stroke="#fff" strokeWidth="3" opacity="0.4" />
  </>
);

const Running = () => <circle cx="90" cy="204" r="6" fill="#0a0c14" />;

const DefsHolder = styled.svg`
  position: absolute;
`;

const SharedDefs = () => (
  <DefsHolder width="0" height="0" aria-hidden="true">
    <defs>
      <linearGradient id="fade"><stop offset="0" stopColor="#4a4a4a" /><stop offset="1" stopColor="#c8c8c8" /></linearGradient>
      <linearGradient id="fadeW"><stop offset="0" stopColor="#fff" /><stop offset="1" stopColor="#333" /></linearGradient>
      <linearGradient id="finder" x2="0" y2="1"><stop offset="0" stopColor="#06d2fb" /><stop offset="1" stopColor="#1b62f0" /></linearGradient>
      <linearGradient id="pad" x2="0" y2="1"><stop offset="0" stopColor="#c2d2d6" /><stop offset="1" stopColor="#7d7c7a" /></linearGradient>
      <linearGradient id="safari" x2="0" y2="1"><stop offset="0" stopColor="#1f8df0" /><stop offset="0.5" stopColor="#14b4ea" /><stop offset="1" stopColor="#1c5fe0" /></linearGradient>
      <linearGradient id="tunes" x1="0" y1="0" x2="0.400" y2="1"><stop offset="0" stopColor="#ff3d4e" /><stop offset="0.400" stopColor="#f43fae" /><stop offset="0.700" stopColor="#9a4df5" /><stop offset="1" stopColor="#33c5f5" /></linearGradient>
      <linearGradient id="note" x1="0.800" y1="0" x2="0.200" y2="1"><stop offset="0" stopColor="#fb3c68" /><stop offset="0.500" stopColor="#b84be8" /><stop offset="1" stopColor="#4b72f2" /></linearGradient>
      <linearGradient id="tele" x2="0" y2="1"><stop offset="0" stopColor="#35a8df" /><stop offset="1" stopColor="#1d8dc8" /></linearGradient>
      <linearGradient id="bin"><stop offset="0" stopColor="#cfd1d3" /><stop offset="0.500" stopColor="#e4e3e2" /><stop offset="1" stopColor="#c4c6c8" /></linearGradient>
    </defs>
  </DefsHolder>
);

const MENUS = ['File', 'Edit', 'Object', 'Type', 'Select', 'Effect', 'View', 'Window', 'Help'];

const StatusItems = () => (
  <StatusList>
    <StatusSlot $w={17}>
      <svg width="17" height="17" viewBox="0 0 51 51"><circle cx="25" cy="25" r="24" fill="#2b2f38" /><path d="M9 24 L39 12 L29 40 L22 28 Z" fill="#aeb6c5" /></svg>
    </StatusSlot>
    <StatusSlot $w={20} $muted><svg width="20" height="15" viewBox="0 0 60 45"><CloudMark /></svg></StatusSlot>
    <StatusSlot $w={28} $center>
      <svg width="19" height="17" viewBox="0 0 57 51" fill="none" stroke="#0a0d18" strokeWidth="3"><path d="M14 14 A22 22 0 1 1 14 38" /><path d="M10 20 V32" strokeDasharray="3 3" /><path d="M3 22 L10 30 L17 22 Z" fill="#0a0d18" strokeWidth="1" /><path d="M32 12 V27 L40 34" /></svg>
    </StatusSlot>
    <StatusSlot $w={16} $center>
      <svg width="11" height="17" viewBox="0 0 33 51" fill="none" stroke="#0a0d18" strokeWidth="3.500"><path d="M4 14 L28 36 L16 47 V4 L28 15 L4 37" /></svg>
    </StatusSlot>
    <StatusSlot $w={20}>
      <svg width="21" height="16" viewBox="0 0 63 48" fill="none" stroke="#0a0d18" strokeWidth="6"><path d="M3 18 C18 2 44 2 59 18 M12 27 C22 16 40 16 50 27 M21 35 C27 29 35 29 41 35" /><path d="M31 36 L37 41 L31 47 L25 41 Z" fill="#0a0d18" strokeWidth="0" /></svg>
    </StatusSlot>
    <StatusSlot $w={17}>
      <svg width="9" height="12" viewBox="0 0 27 36"><path d="M0 11 H10 L25 0 V36 L10 25 H0 Z" fill="#0a0d18" /></svg>
    </StatusSlot>
    <Battery>
      94%
      <svg width="23" height="12" viewBox="0 0 69 36"><rect x="1.500" y="1.500" width="60" height="33" rx="5" fill="none" stroke="#0a0d18" strokeWidth="3" /><rect x="6" y="6" width="51" height="24" fill="#0a0d18" /><path d="M64 12 Q70 18 64 24 Z" fill="#0a0d18" /></svg>
    </Battery>
    <MenuItem>Wed 10:32 PM</MenuItem>
    <MenuItem>sukhmeen</MenuItem>
    <StatusSlot $w={24} $center>
      <svg width="15" height="15" viewBox="0 0 45 45" fill="none" stroke="#0a0d18" strokeWidth="4"><circle cx="18" cy="18" r="14" /><path d="M28 28 L42 42" strokeWidth="5" /></svg>
    </StatusSlot>
    <StatusSlot $w={16}><SiriOrb id="bar" size={16} /></StatusSlot>
    <StatusSlot $w={18}>
      <svg width="18" height="11" viewBox="0 0 54 33" stroke="#0a0d18" strokeWidth="5"><path d="M0 2.500 H5 M11 2.500 H48 M0 16.500 H5 M11 16.500 H54 M0 30.500 H5 M11 30.500 H48" /></svg>
    </StatusSlot>
  </StatusList>
);

const TitleBar = () => (
  <Bar $h={35}>
    <Lights>
      <Light $c="#fb3b44" $dot aria-label="Close" />
      <Light $c="#fdb500" aria-label="Minimize" />
      <Light $c="#07d53c" aria-label="Zoom" />
    </Lights>
    <AiMark>Ai</AiMark>
    <TitleTiles>
      <AppTile>Br</AppTile>
      <AppTile $on>St</AppTile>
    </TitleTiles>
    <TitleIcons>
      <svg width="17" height="11" viewBox="0 0 17 11" fill={ICON}><path d="M0 0 H8 V11 H0 Z M9 0 H17 V5 H9 Z M9 6 H17 V11 H9 Z" /></svg>
      <Chevron />
    </TitleIcons>
    <svg width="18" height="18" viewBox="0 0 54 54" fill={ICON}>
      <path d="M52 1 C36 2 24 12 14 26 L26 38 C42 30 52 16 52 1 Z M14 16 L2 30 L10 29 L20 16 Z M37 35 L26 44 L24 53 L36 42 Z M10 32 L20 42 L10 42 Z" />
    </svg>
    <Spacer />
    <TitleRight>
      <VRule />
      <Workspace>
        <PlainSelect aria-label="Workspace"><option>Essentials</option></PlainSelect>
        <SelectMark><Chevron /></SelectMark>
      </Workspace>
      <VRule />
      <SearchBox>
        <svg width="17" height="12" viewBox="0 0 51 36" fill="none" stroke={ICON} strokeWidth="4"><circle cx="22" cy="13" r="10" /><path d="M14 20 L2 33" strokeWidth="5" /><path d="M34 22 H50 L42 31 Z" fill={ICON} strokeWidth="0" /></svg>
        <SearchInput aria-label="Search" defaultValue="shape" />
      </SearchBox>
    </TitleRight>
  </Bar>
);

const ControlBar = () => (
  <Bar $h={34}>
    <Control>
      <Grip />
      <Group $ml={6}><Label as="span" $w={88} $dim>No Selection</Label></Group>
      <VRule $h={24} />
      <Group $ml={5}>
        <Swatch $fill={YELLOW} aria-label="Fill" />
        <Drop aria-label="Fill options"><Chevron /></Drop>
      </Group>
      <Group $ml={6}>
        <Swatch $fill="#fff" aria-label="Stroke color">
          <svg width="18" height="18" viewBox="0 0 18 18"><rect x="7.500" y="7.500" width="4" height="4" fill="none" stroke="#222" /><path d="M1 17 L17 1" stroke="#f50000" strokeWidth="1.600" /></svg>
        </Swatch>
        <Drop aria-label="Stroke color options"><Chevron /></Drop>
      </Group>
      <Group $ml={13}><Label htmlFor="weight" $w={33} $dotted>Stroke:</Label></Group>
      <Group $ml={6}>
        <Stepper><Chevron dir="up" /><Chevron /></Stepper>
        <Field id="weight" $w={51} />
        <Drop aria-label="Stroke weights"><Chevron /></Drop>
      </Group>
      <Group $ml={6}>
        <Profile />
        <Drop $off disabled aria-label="Width profile"><Chevron color="#6c6c6c" /></Drop>
      </Group>
      <Group $ml={7}>
        <BrushBox><BrushDot />5 pt. Round</BrushBox>
        <Drop aria-label="Brushes"><Chevron /></Drop>
      </Group>
      <Group $ml={8}><Label htmlFor="opacity" $w={39} $dotted>Opacity:</Label></Group>
      <Group $ml={6}>
        <Field id="opacity" $w={59} defaultValue="100%" />
        <Drop aria-label="Opacity slider"><Chevron dir="right" /></Drop>
      </Group>
      <Group $ml={6}><Label as="span" $w={26} $dim>Style:</Label></Group>
      <Group $ml={5}>
        <Swatch $fill="#e4e4e4" aria-label="Graphic style" />
        <Drop aria-label="Graphic styles"><Chevron /></Drop>
      </Group>
      <Group $ml={6}><VRule $h={24} /></Group>
      <Push $w={100}>Document Setup</Push>
      <Push $w={76}>Preferences</Push>
      <Group $ml={10}>
        <svg width="17" height="17" viewBox="0 0 51 51" fill="none" stroke={ICON} strokeWidth="3"><rect x="4" y="18" width="16" height="16" /><rect x="29" y="6" width="16" height="16" /><path d="M1 15 L4 18 M1 37 L4 34 M26 3 L29 6 M48 3 L45 6 M48 25 L45 22" /><path d="M21 14 V50 L31 41 L44 40 Z" fill={ICON} stroke="#535353" /></svg>
      </Group>
      <Group $ml={5}><Chevron /></Group>
    </Control>
    <Spacer />
    <SnapGroup>
      <svg width="14" height="14" viewBox="0 0 14 14" fill="#7c7c7c"><path d="M2 1 H6 V5 H2 Z M8 1 H12 V5 H8 Z M2 9 H6 V13 H2 Z M8 9 H12 V13 H8 Z" /><path d="M0 6.500 H14 V7.500 H0 Z M6.500 0 H7.500 V14 H6.500 Z" fill="#666" /></svg>
      <SnapButton aria-label="Align to pixel grid">
        <svg width="15" height="14" viewBox="0 0 15 14"><path d="M0 0 H4 V4 H0 Z M0 5 H4 V9 H0 Z M0 10 H4 V14 H0 Z" fill={ICON} /><path d="M7 4 H11 Q13.500 4 13.500 6.500 Q13.500 9 11 9 H7" fill="none" stroke={ICON} strokeWidth="2.400" /></svg>
      </SnapButton>
      <Chevron />
      <Group $ml={18}>
        <svg width="12" height="9" viewBox="0 0 12 9" fill={ICON}><path d="M0 0 H2 V2 H0 Z M3 0 H11 V1 H3 Z M0 3 H2 V5 H0 Z M3 4 H11 V5 H3 Z M0 7 H2 V9 H0 Z M3 7 H11 V8 H3 Z" /></svg>
      </Group>
    </SnapGroup>
  </Bar>
);

const Toolbox = () => (
  <ToolPanel>
    <PanelHead><Collapse /></PanelHead>
    <ToolBody>
      <ToolTop><HGrip /></ToolTop>
      {TOOLS.map((group, n) => (
        <ToolGroup key={n}>
          {group.map(g => <Tool key={g.name} $on={g.on} aria-label={g.name}><ToolGlyph g={g} /></Tool>)}
        </ToolGroup>
      ))}
      <FillStroke />
      <ModeRow>
        <Mode aria-label="Color"><svg width="13" height="13"><rect x="0.500" y="0.500" width="12" height="12" fill="#262223" stroke="#000" /><rect x="3" y="3" width="7" height="7" fill="#606060" /></svg></Mode>
        <Mode aria-label="Gradient"><svg width="13" height="13"><rect x="0.500" y="0.500" width="12" height="12" fill="url(#fadeW)" stroke="#000" /></svg></Mode>
        <Mode $on aria-label="None"><svg width="13" height="13"><rect x="0.500" y="0.500" width="12" height="12" fill="#fff" stroke="#000" /><path d="M1 10 L10 1 H12 V3 L3 12 H1 Z" fill="#f50000" /></svg></Mode>
      </ModeRow>
      <ModeRow>
        {[true, false, false].map((on, n) => (
          <Mode key={n} $on={on} aria-label={['Draw Normal', 'Draw Behind', 'Draw Inside'][n]}>
            <svg width="12" height="12" viewBox="0 0 12 12" opacity={n === 2 ? 0.3 : 1}>
              {n === 0 && <><circle cx="4.500" cy="4.500" r="3.500" fill="none" stroke={ICON} strokeWidth="1.400" /><rect x="5" y="5" width="6" height="6" fill={ICON} /></>}
              {n === 1 && <><rect x="5" y="5" width="6" height="6" fill={ICON} /><circle cx="5" cy="5" r="3.800" fill="#535353" stroke={ICON} strokeWidth="1.600" /></>}
              {n === 2 && <><circle cx="6" cy="6" r="4" fill="none" stroke={ICON} strokeWidth="1.400" /><path d="M6 6 H10 A4 4 0 0 1 6 10 Z" fill={ICON} /></>}
            </svg>
          </Mode>
        ))}
      </ModeRow>
      <ScreenMode aria-label="Screen mode">
        <svg width="22" height="16" viewBox="0 0 22 16" fill="#6e6e6e" stroke={ICON}><rect x="0.500" y="5.500" width="13" height="10" /><path d="M0 6 H14" strokeWidth="2" /><rect x="8.500" y="0.500" width="13" height="10" /><path d="M8 1.500 H22" strokeWidth="2" /></svg>
      </ScreenMode>
    </ToolBody>
  </ToolPanel>
);

const Tri = ({ flip, stop, color = '#757575' }: { flip?: boolean; stop?: boolean; color?: string }) => (
  <svg width="8" height="9" viewBox="0 0 8 9" fill={color}>
    <g transform={flip ? 'translate(8 0) scale(-1 1)' : undefined}>
      <path d={stop ? 'M0 0 L5 4.500 L0 9 Z M6 0 H8 V9 H6 Z' : 'M1 0 L6 4.500 L1 9 Z'} />
    </g>
  </svg>
);

const DocumentPane = () => (
  <DocumentArea>
    <TabBar>
      <Tab>
        <svg width="8" height="8" viewBox="0 0 8 8"><path d="M1 1 L7 7 M7 1 L1 7" stroke="#e6e6e6" strokeWidth="1.600" /></svg>
        poster.ai* @ 56.47% (CMYK/GPU Preview)
      </Tab>
    </TabBar>
    <Work>
      <RulerBox><svg aria-hidden="true"><path d="M0 4.500 H16 M4.500 0 V16" stroke="#707070" strokeDasharray="1 1" /><path d="M15.500 0 V16" stroke="#747474" /></svg></RulerBox>
      <RulerBox><HRuler /></RulerBox>
      <VScroll>
        <Chevron dir="up" color="#999" thin />
        <Flex $n={321} />
        <VThumb />
        <Flex $n={317} />
        <Chevron color="#999" thin />
      </VScroll>
      <RulerBox><VRuler /></RulerBox>
      <Canvas>
        <Artboard />
        <PosterBlock />
      </Canvas>
    </Work>
    <FootBar>
      <FootSelect $w={69}>
        <PlainSelect aria-label="Zoom level"><option>56.47%</option></PlainSelect>
        <FootMark><Chevron /></FootMark>
      </FootSelect>
      <FootNav><Tri flip stop /><Tri flip /></FootNav>
      <FootSelect $w={58}>
        <PlainSelect aria-label="Artboard number"><option>1</option></PlainSelect>
        <FootMark><Chevron /></FootMark>
      </FootSelect>
      <FootNav><Tri /><Tri stop /></FootNav>
      <FootLabel>Artboard 1</FootLabel>
      <FootPlay aria-label="Status options"><Tri color="#d8d8d8" /></FootPlay>
      <HScroll>
        <Chevron dir="left" color="#8c8c8c" thin />
        <Flex $n={417} />
        <HThumb />
        <Flex $n={409} />
        <Chevron dir="right" color="#999" thin />
      </HScroll>
      <Corner />
    </FootBar>
  </DocumentArea>
);

export default function App() {
  return (
    <Desktop>
      <GlobalStyle />
      <SharedDefs />
      <MenuBar>
        <MenuList>
          <AppleSlot aria-label="Apple menu">
            <svg width="15" height="17" viewBox="0 0 45 51" fill="#0a0d18"><path d="M22 14 C26 14 29 11 34 12 C38 12 41 14 43 17 C34 22 35 34 44 38 C41 45 37 50 33 50 C29 50 27 48 23 48 C19 48 17 50 14 50 C7 50 1 38 1 28 C1 18 7 12 13 12 C17 12 20 14 22 14 Z M22 12 C21 6 27 1 32 0 C33 6 28 12 22 12 Z" /></svg>
          </AppleSlot>
          <MenuItem $bold>Illustrator CC</MenuItem>
          {MENUS.map(m => <MenuItem key={m}>{m}</MenuItem>)}
        </MenuList>
        <StatusItems />
      </MenuBar>
      <AppWindow>
        <TitleBar />
        <ControlBar />
        <Body>
          <Toolbox />
          <DocumentPane />
          <RightDock>
            <PanelHead $right><Collapse /></PanelHead>
            {PANELS.map((group, n) => (
              <DockGroup key={n}>
                <HGrip />
                <DockIcons>
                  {group.map(g => (
                    <DockButton key={g.name} aria-label={g.name}>
                      <svg width="37" height="28" viewBox="0 0 111 84" aria-hidden="true">{g.art}</svg>
                    </DockButton>
                  ))}
                </DockIcons>
              </DockGroup>
            ))}
          </RightDock>
        </Body>
      </AppWindow>
      <DeskStrip>
        <Dock>
          {DOCK.map(d => (
            <DockApp key={d.name} aria-label={d.name}>
              <svg width="60" height="72" viewBox="0 0 180 216" aria-hidden="true">{d.art}{d.running && <Running />}</svg>
            </DockApp>
          ))}
          <DockRule />
          <DockApp aria-label="Trash">
            <svg width="60" height="72" viewBox="0 0 180 216" aria-hidden="true"><Trash /></svg>
          </DockApp>
        </Dock>
      </DeskStrip>
    </Desktop>
  );
}
